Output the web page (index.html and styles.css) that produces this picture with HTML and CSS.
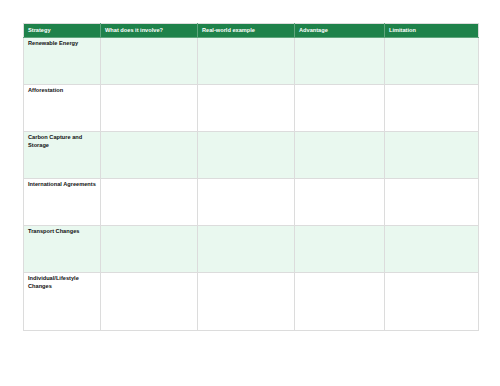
FILE: index.html
```html
<!DOCTYPE html>
<html lang="en">
<head>
<meta charset="utf-8">
<title>Climate Strategies</title>
<link rel="stylesheet" href="styles.css">
</head>
<body>
<div class="page">
  <table class="grid">
    <colgroup>
      <col class="c1"><col class="c2"><col class="c3"><col class="c4"><col class="c5">
    </colgroup>
    <thead>
      <tr class="head">
        <th>Strategy</th>
        <th>What does it involve?</th>
        <th>Real-world example</th>
        <th>Advantage</th>
        <th>Limitation</th>
      </tr>
    </thead>
    <tbody>
      <tr class="row alt"><td class="name">Renewable Energy</td><td></td><td></td><td></td><td></td></tr>
      <tr class="row"><td class="name">Afforestation</td><td></td><td></td><td></td><td></td></tr>
      <tr class="row alt"><td class="name">Carbon Capture and<br>Storage</td><td></td><td></td><td></td><td></td></tr>
      <tr class="row"><td class="name">International Agreements</td><td></td><td></td><td></td><td></td></tr>
      <tr class="row alt"><td class="name">Transport Changes</td><td></td><td></td><td></td><td></td></tr>
      <tr class="row last"><td class="name">Individual/Lifestyle<br>Changes</td><td></td><td></td><td></td><td></td></tr>
    </tbody>
  </table>
</div>
</body>
</html>
```
FILE: styles.css
```css
html, body {
  margin: 0;
  padding: 0;
  background: #ffffff;
}
.page {
  padding: 23px 0 0 23px;
  font-family: "Liberation Sans", Arial, sans-serif;
}
.grid {
  border-collapse: collapse;
  table-layout: fixed;
  width: 455px;
}
.c1 { width: 77px; }
.c2 { width: 97px; }
.c3 { width: 97px; }
.c4 { width: 90px; }
.c5 { width: 94px; }
.grid th,
.grid td {
  border: 1px solid #dcdcdc;
  vertical-align: top;
  text-align: left;
  padding: 2px 3px 2px 4px;
  font-size: 5.65px;
  line-height: 7.5px;
  font-weight: bold;
  color: #111111;
}
.grid .name {
  white-space: nowrap;
}
.head {
  height: 14px;
}
.head th {
  background: #1e824a;
  color: #ffffff;
  padding: 2px 4px;
  vertical-align: middle;
  border-color: #5fa57c;
  border-top-color: #dcdcdc;
}
.head th:first-child { border-left-color: #dcdcdc; }
.head th:last-child { border-right-color: #dcdcdc; }
.row { height: 47px; }
.row.last { height: 58px; }
.alt td { background: #e9f8ef; }
```
